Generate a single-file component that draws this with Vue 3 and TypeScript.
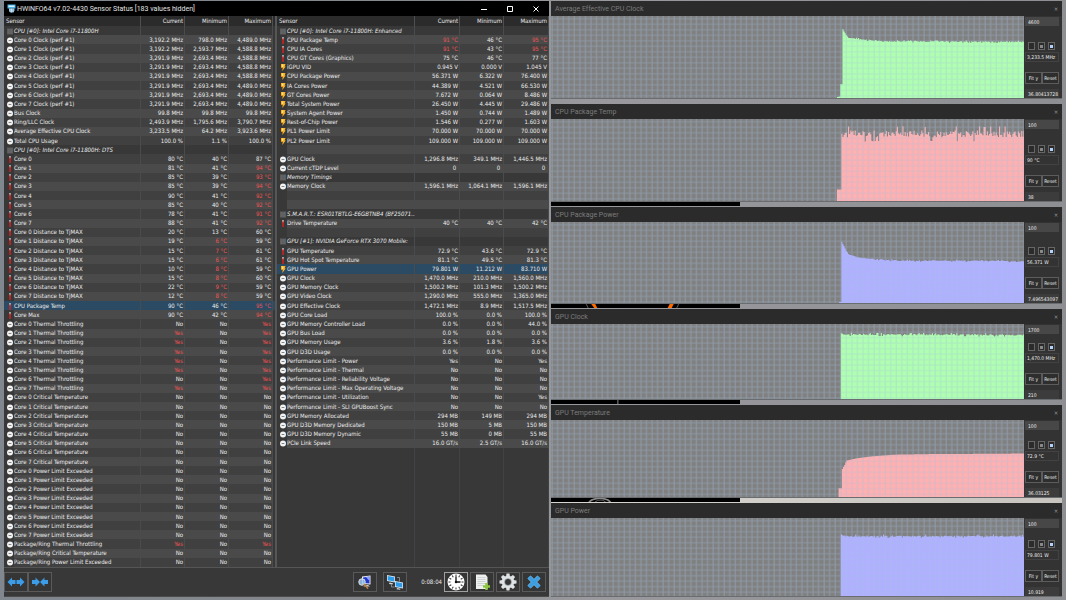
<script setup lang="ts">
type Icon = 'clock' | 'temp' | 'power' | 'chip' | 'none'
interface Row {
  icon: Icon
  label: string
  values: { text: string; hot: boolean }[]
  selected: boolean
  head: boolean
  filler: boolean
}

const ICONS: Record<string, Icon> = { c: 'clock', t: 'temp', p: 'power', h: 'chip' }
const ROWS_PER_PANE = 59

/* icon | label | current | minimum | maximum; "!" marks an alert value, "*" the selected row */
function parse(source: string[]): Row[] {
  const rows = source.map((line): Row => {
    const [kind, label = '', ...rest] = line.split('|')
    const values = [0, 1, 2].map((i) => {
      const v = rest[i] ?? ''
      return { text: v.replace('!', ''), hot: v.startsWith('!') }
    })
    return {
      icon: ICONS[kind.replace('*', '')] ?? 'none',
      label,
      values,
      selected: kind.includes('*'),
      head: kind === 'h',
      filler: false,
    }
  })
  while (rows.length < ROWS_PER_PANE) {
    rows.push({ icon: 'none', label: '', values: parseEmpty(), selected: false, head: false, filler: true })
  }
  return rows
}
function parseEmpty() {
  return [0, 1, 2].map(() => ({ text: '', hot: false }))
}

const cores = [0, 1, 2, 3, 4, 5, 6, 7]
const clocks = [
  '3,192.2 MHz|798.0 MHz|4,489.0 MHz',
  '3,192.2 MHz|2,593.7 MHz|4,588.8 MHz',
  '3,291.9 MHz|2,693.4 MHz|4,588.8 MHz',
  '3,291.9 MHz|2,693.4 MHz|4,588.8 MHz',
  '3,291.9 MHz|2,693.4 MHz|4,588.8 MHz',
  '3,291.9 MHz|2,693.4 MHz|4,489.0 MHz',
  '3,291.9 MHz|2,693.4 MHz|4,489.0 MHz',
  '3,291.9 MHz|2,693.4 MHz|4,489.0 MHz',
]
const temps = [
  '80 °C|40 °C|87 °C', '81 °C|41 °C|!94 °C', '85 °C|39 °C|!93 °C', '85 °C|39 °C|!94 °C',
  '90 °C|41 °C|!92 °C', '85 °C|40 °C|!92 °C', '78 °C|41 °C|!91 °C', '88 °C|41 °C|!92 °C',
]
const dist = [
  '20 °C|13 °C|60 °C', '19 °C|!6 °C|59 °C', '15 °C|!7 °C|61 °C', '15 °C|!6 °C|61 °C',
  '10 °C|!8 °C|59 °C', '15 °C|!8 °C|60 °C', '22 °C|!9 °C|59 °C', '12 °C|!8 °C|59 °C',
]
const throttled = [false, true, true, true, true, true, false, true]

const left = parse([
  'h|CPU [#0]: Intel Core i7-11800H',
  ...cores.map((i) => `c|Core ${i} Clock (perf #1)|${clocks[i]}`),
  'c|Bus Clock|99.8 MHz|99.8 MHz|99.8 MHz',
  'c|Ring/LLC Clock|2,493.9 MHz|1,795.6 MHz|3,790.7 MHz',
  'c|Average Effective CPU Clock|3,233.5 MHz|64.2 MHz|3,923.6 MHz',
  'c|Total CPU Usage|100.0 %|1.1 %|100.0 %',
  'h|CPU [#0]: Intel Core i7-11800H: DTS',
  ...cores.map((i) => `t|Core ${i}|${temps[i]}`),
  ...cores.map((i) => `t|Core ${i} Distance to TjMAX|${dist[i]}`),
  't*|CPU Package Temp|90 °C|46 °C|!95 °C',
  't|Core Max|90 °C|42 °C|!94 °C',
  ...cores.map((i) => `c|Core ${i} Thermal Throttling|${throttled[i] ? '!Yes' : 'No'}|No|!Yes`),
  ...cores.map((i) => `c|Core ${i} Critical Temperature|No|No|No`),
  ...cores.map((i) => `c|Core ${i} Power Limit Exceeded|No|No|No`),
  'c|Package/Ring Thermal Throttling|!Yes|No|!Yes',
  'c|Package/Ring Critical Temperature|No|No|No',
  'c|Package/Ring Power Limit Exceeded|No|No|No',
])

const right = parse([
  'h|CPU [#0]: Intel Core i7-11800H: Enhanced',
  't|CPU Package Temp|!91 °C|46 °C|!95 °C',
  't|CPU IA Cores|!91 °C|43 °C|!95 °C',
  't|CPU GT Cores (Graphics)|75 °C|46 °C|77 °C',
  'p|iGPU VID|0.945 V|0.000 V|1.045 V',
  'p|CPU Package Power|56.371 W|6.322 W|76.400 W',
  'p|IA Cores Power|44.389 W|4.521 W|66.530 W',
  'p|GT Cores Power|7.672 W|0.064 W|8.486 W',
  'p|Total System Power|26.450 W|4.445 W|29.486 W',
  'p|System Agent Power|1.450 W|0.744 W|1.489 W',
  'p|Rest-of-Chip Power|1.546 W|0.277 W|1.603 W',
  'p|PL1 Power Limit|70.000 W|70.000 W|70.000 W',
  'p|PL2 Power Limit|109.000 W|109.000 W|109.000 W',
  '-|',
  'c|GPU Clock|1,296.8 MHz|349.1 MHz|1,446.5 MHz',
  'c|Current cTDP Level|0\u00a0|0\u00a0|0\u00a0',
  'h|Memory Timings',
  'c|Memory Clock|1,596.1 MHz|1,064.1 MHz|1,596.1 MHz',
  '-|',
  '-|',
  'h|S.M.A.R.T.: ESR01TBTLG-E6GBTNB4 (BF25071...',
  't|Drive Temperature|40 °C|40 °C|42 °C',
  '-|',
  'h|GPU [#1]: NVIDIA GeForce RTX 3070 Mobile:',
  't|GPU Temperature|72.9 °C|43.6 °C|72.9 °C',
  't|GPU Hot Spot Temperature|81.1 °C|49.5 °C|81.3 °C',
  'p*|GPU Power|79.801 W|11.212 W|83.710 W',
  'c|GPU Clock|1,470.0 MHz|210.0 MHz|1,560.0 MHz',
  'c|GPU Memory Clock|1,500.2 MHz|101.3 MHz|1,500.2 MHz',
  'c|GPU Video Clock|1,290.0 MHz|555.0 MHz|1,365.0 MHz',
  'c|GPU Effective Clock|1,472.1 MHz|8.9 MHz|1,517.5 MHz',
  'c|GPU Core Load|100.0 %|0.0 %|100.0 %',
  'c|GPU Memory Controller Load|0.0 %|0.0 %|44.0 %',
  'c|GPU Bus Load|0.0 %|0.0 %|0.0 %',
  'c|GPU Memory Usage|3.6 %|1.8 %|3.6 %',
  'c|GPU D3D Usage|0.0 %|0.0 %|0.0 %',
  'c|Performance Limit - Power|Yes|No|Yes',
  'c|Performance Limit - Thermal|No|No|No',
  'c|Performance Limit - Reliability Voltage|No|No|No',
  'c|Performance Limit - Max Operating Voltage|No|No|No',
  'c|Performance Limit - Utilization|No|No|Yes',
  'c|Performance Limit - SLI GPUBoost Sync|No|No|No',
  'c|GPU Memory Allocated|294 MB|149 MB|294 MB',
  'c|GPU D3D Memory Dedicated|150 MB|5 MB|150 MB',
  'c|GPU D3D Memory Dynamic|55 MB|0 MB|55 MB',
  'c|PCIe Link Speed|16.0 GT/s|2.5 GT/s|16.0 GT/s',
])

const panes = [
  { id: 'left', rows: left },
  { id: 'right', rows: right },
]

interface Graph {
  title: string
  max: string
  now: string
  min: string
  fill: string
  height: number
  noise: number
  spiky: boolean
  keys: [number, number][]
}

const GREEN = '#b0ffb0'
const RED = '#ffb0b0'
const BLUE = '#b0b0ff'
const GRAPH_WIDTH = 852

const graphs: Graph[] = [
  { title: 'Average Effective CPU Clock', max: '4600', now: '3,233.5 MHz', min: '36.80413728', fill: GREEN, height: 149, noise: 2, spiky: false,
    keys: [[515, 147], [520, 146], [521, 124], [523, 124], [524, 22], [529, 32], [535, 39], [546, 41], [574, 44], [612, 46], [852, 47]] },
  { title: 'CPU Package Temp', max: '100', now: '90 °C', min: '38', fill: RED, height: 149, noise: 7, spiky: true,
    keys: [[515, 128], [522, 128], [523, 27], [852, 27]] },
  { title: 'CPU Package Power', max: '100', now: '56.371 W', min: '7.496543097', fill: BLUE, height: 147, noise: 2, spiky: false,
    keys: [[519, 145], [522, 145], [523, 36], [529, 49], [536, 59], [550, 64], [580, 67], [620, 70], [852, 71]] },
  { title: 'GPU Clock', max: '1700', now: '1,470.0 MHz', min: '210', fill: GREEN, height: 137, noise: 3, spiky: false,
    keys: [[522, 17], [526, 19], [852, 20]] },
  { title: 'GPU Temperature', max: '100', now: '72.9 °C', min: '36.03125', fill: RED, height: 140, noise: 0, spiky: false,
    keys: [[518, 124], [522, 124], [523, 91], [529, 80], [531, 74], [547, 70], [578, 66], [619, 63], [682, 62], [852, 61]] },
  { title: 'GPU Power', max: '100', now: '79.801 W', min: '10.919', fill: BLUE, height: 142, noise: 3, spiky: false,
    keys: [[522, 30], [527, 33], [852, 33]] },
]

function level(keys: [number, number][], x: number): number {
  for (let i = 1; i < keys.length; i++) {
    const [x1, y1] = keys[i]
    const [x0, y0] = keys[i - 1]
    if (x <= x1) return y0 + ((y1 - y0) * (x - x0)) / (x1 - x0)
  }
  return keys[keys.length - 1][1]
}

function area(g: Graph, seed: number): string {
  let state = seed * 7919 + 17
  const random = () => {
    state = (state * 1103515245 + 12345) % 2147483648
    return state / 2147483648
  }
  const start = g.keys[0][0]
  let d = `M${start} ${g.height}`
  for (let x = start; x < GRAPH_WIDTH; x += 2) {
    let y = level(g.keys, x)
    if (x > 526 || (g.spiky && x > 523)) {
      const r = random() - 0.5
      const burst = g.spiky ? 4 : 2
      y += Math.abs(r) > 0.44 ? r * g.noise * burst : r * g.noise * (g.spiky ? 2 : 1)
    }
    d += `V${y.toFixed(1)}H${Math.min(x + 2, GRAPH_WIDTH)}`
  }
  return `${d}V${g.height}Z`
}

const areas = graphs.map((g, i) => area(g, i + 3))
const ticks = Array.from({ length: 12 }, (_, i) => i * 30)
const teeth = Array.from({ length: 8 }, (_, i) => i * 45)
</script>

<template>
  <div class="desktop">
    <main class="window">
      <header class="titlebar">
        <svg class="logo" viewBox="0 0 18 18" aria-hidden="true">
          <path d="M1 1h16v8H1z" fill="#49b4e6" />
          <path d="M3 3h12v3H3z" fill="#d9f3ff" />
          <path d="M4 9h11v4l-2 4H6l-2-4z" fill="#7fb6d4" />
          <path d="M6 9v7M9 9v8M12 9v7" stroke="#e8f6ff" stroke-width="1.3" />
        </svg>
        <h1>HWiNFO64 v7.02-4430 Sensor Status [183 values hidden]</h1>
        <button type="button" class="sys" aria-label="Minimize">
          <svg viewBox="0 0 8 8"><path d="M1 4.5h6" /></svg>
        </button>
        <button type="button" class="sys" aria-label="Maximize">
          <svg viewBox="0 0 8 8"><path d="M1.5 1.5h5v5h-5z" /></svg>
        </button>
        <button type="button" class="sys" aria-label="Close">
          <svg viewBox="0 0 8 8"><path d="M1.5 1.5l5 5M6.5 1.5l-5 5" /></svg>
        </button>
      </header>

      <div class="panes">
        <table v-for="pane in panes" :key="pane.id" :class="['pane', pane.id]">
          <thead>
            <tr>
              <th scope="col" class="name">Sensor</th>
              <th scope="col">Current</th>
              <th scope="col">Minimum</th>
              <th scope="col">Maximum</th>
            </tr>
          </thead>
          <tbody>
            <tr
              v-for="(row, i) in pane.rows"
              :key="i"
              :class="{ head: row.head, odd: i % 2 === 1, selected: row.selected, filler: row.filler }"
            >
              <td class="name">
                <span class="icon">
                  <svg v-if="row.icon === 'clock'" viewBox="0 0 12 12" aria-hidden="true">
                    <circle cx="6" cy="6" r="6" fill="#f2f2f2" />
                    <path d="M3.2 6h5.6" stroke="#666" stroke-width="1.6" />
                  </svg>
                  <svg v-else-if="row.icon === 'temp'" viewBox="0 0 12 14" aria-hidden="true">
                    <path d="M6 0v5" stroke="#e8e8e8" stroke-width="2.4" />
                    <path d="M6 4v9" stroke="#e02020" stroke-width="2.8" stroke-linecap="round" />
                  </svg>
                  <svg v-else-if="row.icon === 'power'" viewBox="0 0 12 14" aria-hidden="true">
                    <path d="M2 0h9L9.500 5h2L4.500 14l1-6.500H2z" fill="#ffb020" />
                    <path d="M4 1h3L6 6H4z" fill="#ffe27a" />
                  </svg>
                  <svg v-else-if="row.icon === 'chip'" viewBox="0 0 12 12" aria-hidden="true">
                    <path d="M0 0h12v12H0z" fill="#5c5c5c" />
                    <path d="M3 1v10M6 1v10M9 1v10" stroke="#6c6c6c" />
                  </svg>
                </span>
                <span class="label">{{ row.label }}</span>
              </td>
              <td v-for="(v, k) in row.values" :key="k" :class="{ hot: v.hot }">{{ v.text }}</td>
            </tr>
          </tbody>
        </table>
      </div>

      <footer class="toolbar">
        <div class="pair">
          <button type="button" class="tool" aria-label="Expand columns">
            <svg viewBox="0 0 36 28">
              <path d="M1 14l9-9v5h7v8h-7v5zM35 14l-9-9v5h-7v8h7v5z" fill="#3c9ce8" />
            </svg>
          </button>
          <button type="button" class="tool" aria-label="Shrink columns">
            <svg viewBox="0 0 36 28">
              <path d="M18 14L9 5v5H2v8h7v5zM18 14l9-9v5h7v8h-7v5z" fill="#3c9ce8" />
            </svg>
          </button>
        </div>
        <span class="grow"></span>
        <button type="button" class="tool" aria-label="System summary">
          <svg viewBox="0 0 36 32">
            <path d="M12 5l17-2v18l-17-1z" fill="#e9edf2" />
            <path d="M14 7l13-2v14l-13-1z" fill="#2337c8" />
            <path d="M20 6l7-1v9z" fill="#8ea6ff" />
            <path d="M15 25h13l-4-3h-6z" fill="#c9ced6" />
            <circle cx="12" cy="16" r="6.5" fill="#9cc8ea" fill-opacity=".85" stroke="#d8dde2" stroke-width="2" />
            <path d="M17 21l6 7" stroke="#b5803f" stroke-width="3.5" stroke-linecap="round" />
          </svg>
        </button>
        <button type="button" class="tool remote" aria-label="Remote monitoring">
          <svg viewBox="0 0 36 32">
            <path d="M2 2l16 3v12L2 14z" fill="#d4e6f2" />
            <path d="M3.5 4l13 2.4v8.6L3.5 12.6z" fill="#2f9be8" />
            <path d="M7 17l7 1.5-1 2.5-7-1z" fill="#cfd6dc" />
            <path d="M22 7h5v8M11 21v5h6" fill="none" stroke="#9aa0a6" stroke-width="1.5" />
            <path d="M18 14l16 3v12l-16-3z" fill="#d4e6f2" />
            <path d="M19.5 16l13 2.4v8.6l-13-2.4z" fill="#2f9be8" />
            <path d="M22 28l7 1.5-1 2-7-1z" fill="#cfd6dc" />
          </svg>
        </button>
        <time class="elapsed">0:08:04</time>
        <button type="button" class="tool active" aria-label="Reset timer">
          <svg viewBox="0 0 36 36">
            <circle cx="18" cy="18" r="17" fill="#fff" />
            <path
              v-for="t in ticks" :key="t" d="M18 3v4" stroke="#333" stroke-width="2"
              :transform="`rotate(${t} 18 18)`"
            />
            <path d="M18 7v11h9" fill="none" stroke="#111" stroke-width="2.6" />
            <circle cx="18" cy="18" r="2.5" fill="#111" />
          </svg>
        </button>
        <button type="button" class="tool" aria-label="Start logging">
          <svg viewBox="0 0 36 36">
            <path d="M6 3h19l4 5v24H6z" fill="#eef0f0" />
            <path d="M9 9h16M9 13h16M9 17h16M9 21h16M9 25h12" stroke="#c3c8ca" stroke-width="1.5" />
            <path d="M27 20v14M20 27h14" stroke="#8cc63f" stroke-width="5" />
          </svg>
        </button>
        <button type="button" class="tool" aria-label="Settings">
          <svg viewBox="0 0 36 36">
            <path
              v-for="t in teeth" :key="t" d="M15 1h6l1 7h-8z" fill="#dfe3e6"
              :transform="`rotate(${t} 18 18)`"
            />
            <circle cx="18" cy="18" r="9.5" fill="none" stroke="#dfe3e6" stroke-width="6" />
            <circle cx="18" cy="18" r="7" fill="none" stroke="#9ba1a6" stroke-width="1.5" />
          </svg>
        </button>
        <button type="button" class="tool" aria-label="Close sensors">
          <svg viewBox="0 0 36 36">
            <path d="M8 8l20 20M28 8L8 28" stroke="#7fbce6" stroke-width="9" />
            <path d="M8 8l20 20M28 8L8 28" stroke="#3c9ee0" stroke-width="6.5" />
          </svg>
        </button>
      </footer>
    </main>

    <div class="graphs">
      <template v-for="(g, i) in graphs" :key="g.title">
        <div v-if="i > 0" :class="['strip', `s${i}`]">
          <svg v-if="i > 1" viewBox="0 0 188 5" preserveAspectRatio="none" aria-hidden="true">
            <path d="M0 0h188v5H0z" fill="#000" />
            <template v-if="i === 3">
              <path d="M40 0h4l2 5h-3zM118 0h4l-2 5h-4z" fill="#ff6a00" />
              <path d="M35 0l2 5M127 0l-2 5" stroke="#555" />
            </template>
            <path v-if="i === 4" d="M66.5 0v5" stroke="#888" />
            <template v-if="i === 5">
              <path d="M38 5c4-6 17-6 21 0" fill="none" stroke="#888" stroke-width="2" />
              <path d="M44 5c2-3 8-3 10 0" fill="none" stroke="#666" />
            </template>
          </svg>
        </div>
        <section class="graph">
          <header>
            <h2>{{ g.title }}</h2>
            <button type="button" :aria-label="`Close ${g.title}`">×</button>
          </header>
          <div class="body">
            <svg
              class="plot" :viewBox="`0 0 ${GRAPH_WIDTH} ${g.height}`" preserveAspectRatio="none"
              role="img" :aria-label="`${g.title} history`"
            >
              <defs>
                <pattern :id="`grid${i}`" width="10" height="10" patternUnits="userSpaceOnUse">
                  <path d="M2 0v10M0 5h10" stroke="#a4c0e2" stroke-opacity=".38" stroke-width="2" />
                </pattern>
              </defs>
              <rect :width="GRAPH_WIDTH" :height="g.height" fill="#808080" />
              <path :d="areas[i]" :fill="g.fill" />
              <rect :width="GRAPH_WIDTH" :height="g.height" :fill="`url(#grid${i})`" />
            </svg>
            <div class="side">
              <input class="limit" type="text" :value="g.max" :aria-label="`${g.title} upper limit`" />
              <div class="modes">
                <input type="radio" :name="`mode${i}`" aria-label="Hidden scale" />
                <input type="radio" :name="`mode${i}`" class="mid" aria-label="Coarse scale" />
                <input type="radio" :name="`mode${i}`" class="full" checked aria-label="Full scale" />
              </div>
              <output class="now">{{ g.now }}</output>
              <div class="actions">
                <button type="button">Fit y</button>
                <button type="button">Reset</button>
              </div>
              <input class="limit low" type="text" :value="g.min" :aria-label="`${g.title} lower limit`" />
            </div>
          </div>
        </section>
      </template>
    </div>
  </div>
</template>

<style>
html,
body {
  background: #85888c;
}
</style>

<style scoped>
* {
  box-sizing: border-box;
}
.desktop {
  display: grid;
  grid-template-columns: 545fr 2px 511fr;
  grid-template-rows: minmax(0, 1fr);
  height: 100vh;
  padding: 1px 4px 3px;
  background: linear-gradient(90deg, #81878f, #85888c 40%, #9a9a9e 55%, #8e8f93);
  font-family: "DejaVu Sans Condensed", Roboto, sans-serif;
  font-size: 6px;
  line-height: 8px;
  color: #ececec;
}
button,
input {
  font: inherit;
  color: inherit;
  margin: 0;
  padding: 0;
}
h1,
h2 {
  margin: 0;
  font-family: Roboto, "Open Sans", sans-serif;
  font-size: 7px;
  font-weight: 400;
}
.window {
  display: flex;
  flex-direction: column;
  min-height: 0;
  background: #383838;
  border-bottom: 1px solid #4a4a4a;
}
.titlebar {
  display: flex;
  align-items: center;
  height: 15px;
  padding-left: 3px;
  background: #000;
}
.logo {
  width: 9px;
  height: 9px;
  margin-right: 1px;
}
.titlebar h1 {
  flex: 1;
  color: #e4e4e4;
}
.sys {
  width: 26px;
  height: 15px;
  display: grid;
  place-items: center;
  border: 0;
  background: none;
}
.sys svg {
  width: 8px;
  height: 8px;
  fill: none;
  stroke: #fff;
}
.panes {
  flex: 1;
  min-height: 0;
  display: grid;
  grid-template-columns: 271fr 272fr;
  grid-template-rows: minmax(0, 1fr);
  gap: 2px;
  background: #565656;
}
.pane {
  display: flex;
  flex-direction: column;
  min-height: 0;
  background: #383838;
}
.pane tr {
  display: grid;
  grid-template-columns: 137fr 44fr 44fr 44fr;
  align-items: center;
  min-height: 0;
}
.pane.left tr {
  padding-right: 2px;
}
.pane.right tr {
  grid-template-columns: 138fr 45fr 44fr 45fr;
}
thead {
  display: block;
  background: #2b2b2b;
}
thead tr {
  height: 10px;
}
tbody {
  flex: 1;
  min-height: 0;
  display: grid;
  grid-template-rows: repeat(59, minmax(0, 1fr));
}
th,
td {
  display: flex;
  align-items: center;
  justify-content: flex-end;
  height: 100%;
  min-width: 0;
  padding: 0 1px 0 0;
  font-weight: 400;
  white-space: nowrap;
  border-right: 1px solid #4c5052;
}
th.name {
  justify-content: flex-start;
  padding-left: 2px;
}
td {
  background: #404040;
  border-right-color: #484c4e;
}
.odd td {
  background: #4a4a4a;
}
.head td,
.filler td {
  background: #383838;
}
.filler td {
  border-right-color: #404244;
}
td.name {
  justify-content: flex-start;
  padding: 0;
  background: none;
}
.label {
  flex: 1;
  align-self: stretch;
  display: flex;
  align-items: center;
  background: #404040;
}
.odd .label {
  background: #4a4a4a;
}
.head .label,
.filler .label {
  background: #383838;
}
.head .label {
  font-style: italic;
}
.icon {
  flex: none;
  width: 10px;
  height: 8px;
  padding: 1px 0 0 3px;
}
.icon svg {
  display: block;
  width: 6px;
  height: 7px;
}
.selected,
.selected td,
.selected .label {
  background: #2b4a63;
}
.hot {
  color: #f05454;
}
.toolbar {
  display: flex;
  align-items: center;
  gap: 2px;
  height: 29px;
  padding-right: 3px;
  border-top: 1px solid #555;
}
.pair {
  display: flex;
}
.grow {
  flex: 1;
}
.tool {
  width: 24px;
  height: 20px;
  display: grid;
  place-items: center;
  background: #353535;
  border: 1px solid #5a5a5a;
}
.tool svg {
  width: 18px;
  height: 18px;
}
.remote {
  margin-left: 4px;
}
.elapsed {
  margin-left: 12px;
}
.tool.active {
  border-color: #a0a0a0;
}
.graphs {
  grid-column: 3;
  min-height: 0;
  display: grid;
  grid-template-rows:
    minmax(0, 98fr) 5px minmax(0, 98fr) 5px minmax(0, 97fr) 5px
    minmax(0, 91fr) 5px minmax(0, 93fr) 5px minmax(0, 94fr);
}
.strip {
  display: flex;
}
.strip svg {
  width: 37%;
  height: 4px;
}
.s5 {
  background: linear-gradient(90deg, #d8d4d0, #c8c4c0);
}
.graph {
  display: flex;
  flex-direction: column;
  min-height: 0;
  background: #333;
  border-bottom: 1px solid #6a6d70;
}
.graph header {
  display: flex;
  align-items: center;
  justify-content: space-between;
  height: 15px;
  padding-left: 4px;
  background: #2b2b2b;
}
.graph h2 {
  color: #7c7c7c;
}
.graph header button {
  width: 12px;
  border: 0;
  background: none;
  color: #999;
}
.body {
  flex: 1;
  display: flex;
  min-height: 0;
}
.plot {
  flex: 1;
  min-width: 0;
  height: 100%;
}
.side {
  width: 38px;
  display: flex;
  flex-direction: column;
  padding: 1px 3px 0 1px;
  font-size: 5px;
}
.limit {
  width: 100%;
  height: 9px;
  padding-left: 3px;
  margin-bottom: auto;
  border: 0;
  background: #474747;
}
.limit.low {
  margin: 5px 0 0;
  background: #3c3c3c;
}
.modes {
  display: flex;
  gap: 3px;
  padding-left: 3px;
  margin-bottom: 2px;
}
.modes input {
  appearance: none;
  display: grid;
  place-items: center;
  width: 7px;
  height: 8px;
  border: 1px solid #666;
  background: #2b2b2b;
}
.modes .mid::before,
.modes .full::before {
  content: "";
  width: 3px;
  height: 3px;
  background: #888;
}
.modes .full::before {
  background: #b4d2ff;
}
.now {
  display: block;
  height: 10px;
  padding-left: 1px;
  white-space: nowrap;
  border: 1px solid #424242;
}
.actions {
  display: grid;
  grid-template-columns: 1fr 1fr;
  margin-top: 10px;
}
.actions button {
  height: 12px;
  border: 1px solid #5c5c5c;
  background: #2e2e2e;
}
</style>
